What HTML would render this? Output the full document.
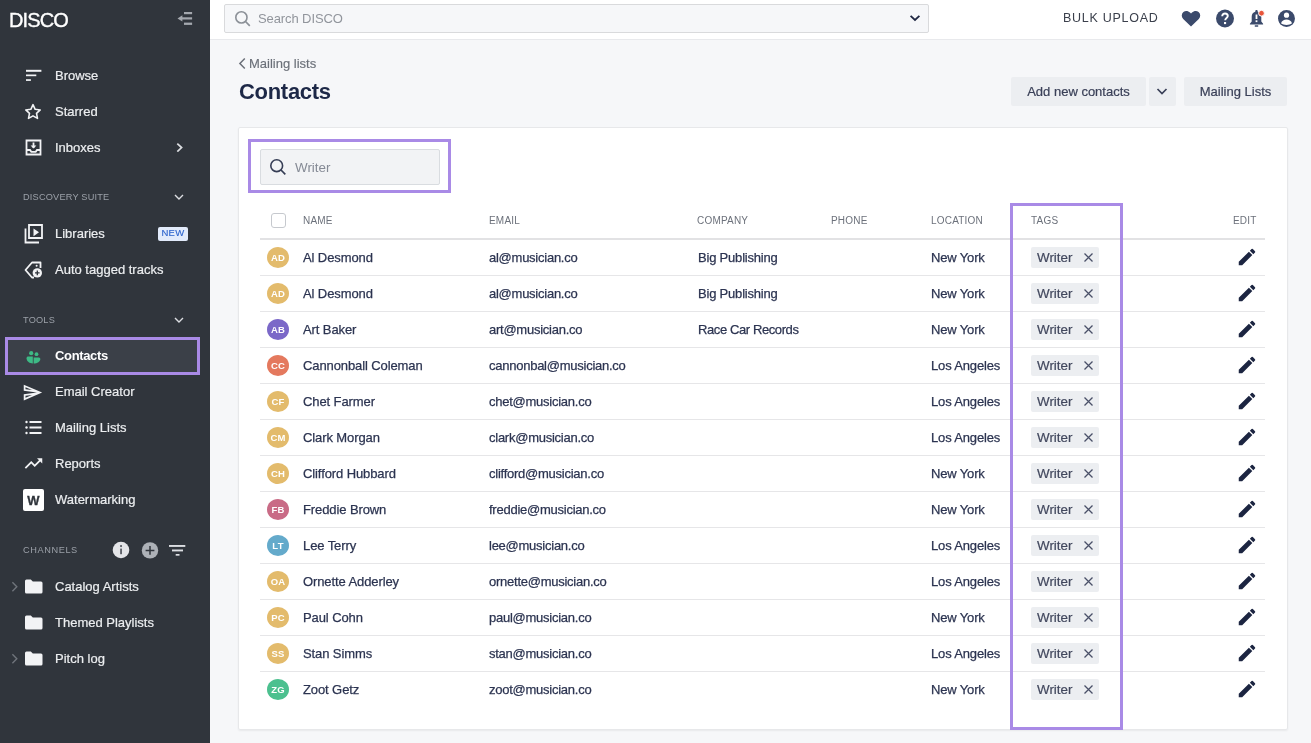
<!DOCTYPE html>
<html><head><meta charset="utf-8">
<style>

*{box-sizing:border-box;margin:0;padding:0}
html,body{width:1311px;height:743px;overflow:hidden;background:#f6f7f9;font-family:"Liberation Sans",sans-serif;}
.abs{position:absolute}
#sb{position:absolute;left:0;top:0;width:210px;height:743px;background:#30353c;color:#fff}
#sb .it{position:absolute;left:55px;font-size:13px;color:#eceef0;line-height:16px;letter-spacing:0;-webkit-text-stroke:.2px #eceef0}
#sb .ic{position:absolute}
#sb .sec{position:absolute;left:23px;font-size:9.2px;color:#9ba0a8;line-height:12px;letter-spacing:.2px}
#top{position:absolute;left:210px;top:0;width:1101px;height:40px;background:#fff;border-bottom:1px solid #e8e9ec}
#card{position:absolute;left:238px;top:127px;width:1050px;height:603px;background:#fff;border:1px solid #e7e8ea;border-radius:2px;box-shadow:0 1px 2px rgba(0,0,0,.06)}
.txt{position:absolute;font-size:13px;color:#2c3451;line-height:16px;white-space:nowrap;letter-spacing:-.2px;-webkit-text-stroke:.25px #2c3451}
.hd{position:absolute;font-size:10px;color:#6c717b;line-height:12px;top:215px;letter-spacing:.2px}
.sep{position:absolute;left:260px;width:1005px;height:1px;background:#e6e6e8}
.av{position:absolute;left:267px;width:22px;height:21px;border-radius:50%;color:#fff;font-size:9.5px;font-weight:bold;text-align:center;line-height:21px;letter-spacing:.2px}
.tag{position:absolute;left:1031px;width:68px;height:21px;background:#eceef1;border-radius:2px}
.tag span{position:absolute;left:6px;top:3px;font-size:13.4px;color:#42485e;line-height:16px;-webkit-text-stroke:.2px #42485e}
.tag svg{position:absolute;left:52px;top:5px}
.ed{position:absolute;left:1236px}

#root{position:absolute;left:0;top:0;width:1311px;height:743px;overflow:hidden;will-change:transform}

</style></head><body><div id="root">
<div id="sb">
<div class="abs" style="left:9px;top:8px;font-size:20px;color:#fff;line-height:24px;letter-spacing:-.9px;-webkit-text-stroke:.35px #fff">DISCO</div>
<svg class="abs" style="left:176px;top:10px" width="18" height="16" viewBox="0 0 18 16"><rect x="8" y="2" width="8.1" height="2.2" fill="#a4a8ae"/><rect x="5" y="7.3" width="11.1" height="2.2" fill="#a4a8ae"/><rect x="8" y="12.6" width="8.1" height="2.3" fill="#a4a8ae"/><path d="M1.5 8.4L6.4 5.3V11.5z" fill="#a4a8ae"/></svg>
<div class="it" style="top:68px">Browse</div>
<div class="it" style="top:104px">Starred</div>
<div class="it" style="top:140px">Inboxes</div>
<div class="it" style="top:226px">Libraries</div>
<div class="it" style="top:262px">Auto tagged tracks</div>
<div class="it" style="top:384px">Email Creator</div>
<div class="it" style="top:420px">Mailing Lists</div>
<div class="it" style="top:456px">Reports</div>
<div class="it" style="top:492px">Watermarking</div>
<div class="it" style="top:579px">Catalog Artists</div>
<div class="it" style="top:615px">Themed Playlists</div>
<div class="it" style="top:651px">Pitch log</div>
<div class="abs" style="left:5px;top:337px;width:195px;height:38px;border:3px solid #a98ae6;background:#3b4048"></div>
<div class="it" style="top:348px;font-weight:bold;color:#fff;letter-spacing:-.35px;-webkit-text-stroke:0">Contacts</div>
<div class="sec" style="top:191px;">DISCOVERY SUITE</div>
<div class="sec" style="top:314px;">TOOLS</div>
<div class="sec" style="top:544px;letter-spacing:.6px">CHANNELS</div>
<div class="abs" style="left:158px;top:227px;width:30px;height:14px;background:#e2ebfb;border-radius:2px;color:#2a62cc;font-size:9.5px;line-height:11px;text-align:center;letter-spacing:.3px;-webkit-text-stroke:.1px #2a62cc">NEW</div>
<svg class="ic" style="left:25px;top:68px" width="18" height="14" viewBox="0 0 18 14"><rect x="1" y="1.8" width="15.4" height="2" fill="#f2f3f5"/><rect x="1" y="6.5" width="10.3" height="1.7" fill="#f2f3f5"/><rect x="1" y="11.2" width="4.9" height="1.7" fill="#f2f3f5"/></svg>
<svg class="ic" style="left:23px;top:102px" width="20" height="20" viewBox="0 0 24 24"><path d="M12 3.2l2.6 5.6 6.1.7-4.5 4.2 1.2 6-5.4-3-5.4 3 1.2-6-4.5-4.2 6.1-.7z" fill="none" stroke="#f2f3f5" stroke-width="1.9" stroke-linejoin="round"/></svg>
<svg class="ic" style="left:25px;top:139px" width="17" height="17" viewBox="0 0 17 17"><path d="M1.5 1.5h14v14h-14z" fill="none" stroke="#f2f3f5" stroke-width="1.8"/><path d="M1.5 11h3.5l1.3 1.8h4.4l1.3-1.8h3.5" fill="none" stroke="#f2f3f5" stroke-width="1.8"/><path d="M8.5 3.5v5.5" stroke="#f2f3f5" stroke-width="1.8"/><path d="M5.6 6.6h5.8L8.5 9.6z" fill="#f2f3f5"/></svg>
<svg class="ic" style="left:174px;top:142px" width="10" height="10" viewBox="0 0 10 10"><path d="M3.3 1.6L7.6 5.6 3.3 9.6" fill="none" stroke="#dcdee2" stroke-width="1.7"/></svg>
<svg class="ic" style="left:174px;top:192px" width="10" height="10" viewBox="0 0 10 10"><path d="M1 3l4 4 4-4" fill="none" stroke="#dcdee2" stroke-width="1.4"/></svg>
<svg class="ic" style="left:174px;top:315px" width="10" height="10" viewBox="0 0 10 10"><path d="M1 3l4 4 4-4" fill="none" stroke="#dcdee2" stroke-width="1.4"/></svg>
<svg class="ic" style="left:24px;top:224px" width="20" height="20" viewBox="0 0 20 20"><path d="M5 1h13v13H5z" fill="none" stroke="#f2f3f5" stroke-width="1.8"/><path d="M1.5 4.5V18.5H15" fill="none" stroke="#f2f3f5" stroke-width="1.8"/><path d="M9.5 4.5L15 8.3 9.5 12.3z" fill="#f2f3f5"/></svg>
<svg class="ic" style="left:24px;top:260px" width="20" height="20" viewBox="0 0 20 20"><path d="M10 17.5H8L1.5 10 8 2.5H16.5V8" fill="none" stroke="#f2f3f5" stroke-width="1.8" stroke-linejoin="round"/><circle cx="12.6" cy="5.8" r="1" fill="#f2f3f5"/><circle cx="13.3" cy="12.9" r="4.7" fill="#f2f3f5"/><path d="M13.3 10.6v4.6M11 12.9h4.6" stroke="#30353c" stroke-width="1.3"/></svg>
<svg class="ic" style="left:26px;top:350px" width="15" height="15" viewBox="0 0 15 15"><circle cx="5.2" cy="3.2" r="2.1" fill="#3dba85"/><circle cx="10.5" cy="4.2" r="1.9" fill="#3dba85"/><path d="M0.6 8.2C0.6 7 1.5 6.6 2.6 6.6h4.2V13.4C3.6 13.4 .6 11.5.6 8.2z" fill="#3dba85"/><path d="M7.6 7.4h4.8c1 0 1.9.5 1.9 1.5 0 2.6-2.9 4.5-6.7 4.5z" fill="#3dba85"/></svg>
<svg class="ic" style="left:22px;top:382px" width="21" height="21" viewBox="0 0 24 24"><path d="M4.01 6.03l7.51 3.22-7.52-1 .01-2.22m7.5 8.72L4 17.97v-2.22l7.51-1M2.01 3L2 10l15 2-15 2 .01 7L23 12 2.01 3z" fill="#f2f3f5"/></svg>
<svg class="ic" style="left:25px;top:420px" width="18" height="15" viewBox="0 0 18 15"><circle cx="1.5" cy="2" r="1.2" fill="#f2f3f5"/><circle cx="1.5" cy="7.5" r="1.2" fill="#f2f3f5"/><circle cx="1.5" cy="13" r="1.2" fill="#f2f3f5"/><rect x="4.5" y="1" width="12" height="2" fill="#f2f3f5"/><rect x="4.5" y="6.5" width="12" height="2" fill="#f2f3f5"/><rect x="4.5" y="12" width="12" height="2" fill="#f2f3f5"/></svg>
<svg class="ic" style="left:23px;top:453px" width="21" height="21" viewBox="0 0 24 24"><path d="M16 6l2.29 2.29-4.88 4.88-4-4L2 16.59 3.41 18l6-6 4 4 6.3-6.29L22 12V6z" fill="#f2f3f5"/></svg>
<div class="ic" style="left:23px;top:489px;width:21px;height:22px;background:#fff;border-radius:2px;color:#30353c;font-weight:bold;font-size:13px;text-align:center;line-height:24px;-webkit-text-stroke:.3px #30353c">W</div>
<svg class="ic" style="left:112px;top:541px" width="18" height="18" viewBox="0 0 18 18"><circle cx="9" cy="9" r="8.3" fill="#e4e5e8"/><rect x="8.2" y="7.6" width="1.7" height="5.6" fill="#50545b"/><circle cx="9.05" cy="5.1" r="1.05" fill="#50545b"/></svg>
<svg class="ic" style="left:141px;top:541px" width="18" height="18" viewBox="0 0 18 18"><circle cx="9" cy="9.4" r="8.2" fill="#adb1b7"/><path d="M9 5v8.8M4.6 9.4h8.8" stroke="#30353c" stroke-width="1.5"/></svg>
<svg class="ic" style="left:168px;top:545px" width="18" height="12" viewBox="0 0 18 12"><rect x="1" y="0" width="16.3" height="1.9" fill="#dcdee2"/><rect x="4" y="4.5" width="11" height="1.9" fill="#dcdee2"/><rect x="7.7" y="9" width="3.8" height="1.7" fill="#dcdee2"/></svg>
<svg class="ic" style="left:10px;top:581px" width="9" height="11" viewBox="0 0 9 11"><path d="M2.4 1.3L6.8 5.8 2.4 10.3" fill="none" stroke="#6f747b" stroke-width="1.4"/></svg>
<svg class="ic" style="left:24px;top:579px" width="19" height="16" viewBox="0 0 19 16"><path d="M1 2a1.5 1.5 0 0 1 1.5-1.5h4.3l2 2h8.2a1.5 1.5 0 0 1 1.5 1.5v9a1.5 1.5 0 0 1-1.5 1.5H2.5A1.5 1.5 0 0 1 1 13z" fill="#f2f3f5"/></svg>
<svg class="ic" style="left:24px;top:615px" width="19" height="16" viewBox="0 0 19 16"><path d="M1 2a1.5 1.5 0 0 1 1.5-1.5h4.3l2 2h8.2a1.5 1.5 0 0 1 1.5 1.5v9a1.5 1.5 0 0 1-1.5 1.5H2.5A1.5 1.5 0 0 1 1 13z" fill="#f2f3f5"/></svg>
<svg class="ic" style="left:10px;top:653px" width="9" height="11" viewBox="0 0 9 11"><path d="M2.4 1.3L6.8 5.8 2.4 10.3" fill="none" stroke="#6f747b" stroke-width="1.4"/></svg>
<svg class="ic" style="left:24px;top:651px" width="19" height="16" viewBox="0 0 19 16"><path d="M1 2a1.5 1.5 0 0 1 1.5-1.5h4.3l2 2h8.2a1.5 1.5 0 0 1 1.5 1.5v9a1.5 1.5 0 0 1-1.5 1.5H2.5A1.5 1.5 0 0 1 1 13z" fill="#f2f3f5"/></svg>
</div>
<div id="top"></div>
<div class="abs" style="left:224px;top:4px;width:705px;height:29px;border:1px solid #d9dadc;border-radius:2px;background:#f6f7f9"></div>
<svg class="abs" style="left:234px;top:10px" width="17" height="17" viewBox="0 0 17 17"><circle cx="7.4" cy="7.4" r="5.6" fill="none" stroke="#8b9097" stroke-width="1.6"/><path d="M11.5 11.5l4.3 4.3" stroke="#8b9097" stroke-width="1.7"/></svg>
<div class="abs" style="left:258px;top:11px;font-size:13px;color:#91959c;line-height:16px;letter-spacing:-.1px">Search DISCO</div>
<svg class="abs" style="left:909px;top:12px" width="12" height="10" viewBox="0 0 12 10"><path d="M1.6 3.8L6 8l4.4-4.2" fill="none" stroke="#1f2742" stroke-width="1.8"/></svg>
<div class="abs" style="left:1063px;top:10px;font-size:12.5px;color:#3b404c;letter-spacing:.72px;line-height:16px">BULK UPLOAD</div>
<svg class="abs" style="left:1181px;top:10px" width="20" height="17" viewBox="0 0 20 17"><path d="M10 16.5L2.2 9C.2 7 .3 3.7 2.4 2 4.4.4 7.3.8 9 2.6l1 1 1-1C12.7.8 15.6.4 17.6 2c2.1 1.7 2.2 5 .2 7z" fill="#3b4a6b"/></svg>
<svg class="abs" style="left:1215px;top:9px" width="20" height="19" viewBox="0 0 20 19"><circle cx="10" cy="9.5" r="9" fill="#3b4a6b"/><path d="M7.2 7.3c0-1.7 1.2-2.8 2.8-2.8s2.8 1.1 2.8 2.6c0 1.9-2.6 2-2.6 4.1" fill="none" stroke="#fff" stroke-width="1.9"/><rect x="9" y="13" width="2.1" height="2.1" fill="#fff"/></svg>
<svg class="abs" style="left:1248px;top:9px" width="18" height="19" viewBox="0 0 18 19"><path d="M8.5 1c.7 0 1.2.5 1.2 1.2v.6c2.4.6 3.6 2.6 3.6 5v4.7l1.8 2.2v.8H1.9v-.8l1.8-2.2V7.8c0-2.4 1.2-4.4 3.6-5v-.6C7.3 1.5 7.8 1 8.5 1z" fill="#3b4a6b"/><rect x="7.6" y="5.5" width="1.8" height="4.5" fill="#fff"/><rect x="7.6" y="11.3" width="1.8" height="1.8" fill="#fff"/><path d="M6.8 17h3.4" stroke="#3b4a6b" stroke-width="1.5"/><circle cx="13.5" cy="4.2" r="2.9" fill="#e8553b" stroke="#fff" stroke-width="1"/></svg>
<svg class="abs" style="left:1277px;top:9px" width="19" height="19" viewBox="0 0 19 19"><circle cx="9.5" cy="9.45" r="8.45" fill="#3b4a6b"/><circle cx="9.5" cy="6.2" r="2.6" fill="#fff"/><path d="M4 14.2C4.8 12 7 10.6 9.5 10.6S14.2 12 15 14.2C13.6 15.3 11.6 15.9 9.5 15.9S5.4 15.3 4 14.2z" fill="#fff"/></svg>
<svg class="abs" style="left:238px;top:57px" width="9" height="13" viewBox="0 0 9 13"><path d="M6.8 1.5L1.9 6.5l4.9 5" fill="none" stroke="#6b7079" stroke-width="1.5"/></svg>
<div class="abs" style="left:249px;top:56px;font-size:13px;-webkit-text-stroke:.15px #6b7079;color:#6b7079;line-height:16px">Mailing lists</div>
<div class="abs" style="left:239px;top:79px;font-size:22px;font-weight:bold;color:#1d2847;line-height:25px;letter-spacing:-.3px">Contacts</div>
<div class="abs" style="left:1011px;top:77px;width:135px;height:29px;background:#eceef1;border-radius:2px;font-size:13px;color:#3a4058;line-height:30px;text-align:center;-webkit-text-stroke:.2px #3a4058">Add new contacts</div>
<div class="abs" style="left:1149px;top:77px;width:27px;height:29px;background:#eceef1;border-radius:2px"></div>
<svg class="abs" style="left:1156px;top:87px" width="12" height="9" viewBox="0 0 12 9"><path d="M1.5 2l4.5 4.5 4.5-4.5" fill="none" stroke="#3a4058" stroke-width="1.7"/></svg>
<div class="abs" style="left:1184px;top:77px;width:103px;height:29px;background:#eceef1;border-radius:2px;font-size:13px;color:#3a4058;line-height:30px;text-align:center;-webkit-text-stroke:.2px #3a4058">Mailing Lists</div>
<div id="card"></div>
<div class="abs" style="left:260px;top:149px;width:180px;height:36px;background:#f2f3f5;border:1px solid #d9dce0;border-radius:2px"></div>
<svg class="abs" style="left:269px;top:158px" width="18" height="18" viewBox="0 0 18 18"><circle cx="7.7" cy="7.7" r="5.9" fill="none" stroke="#363d55" stroke-width="1.6"/><path d="M12 12l4.3 4.3" stroke="#363d55" stroke-width="1.7"/></svg>
<div class="abs" style="left:295px;top:160px;font-size:13.4px;color:#858a95;line-height:16px">Writer</div>
<div class="abs" style="left:248px;top:139px;width:203px;height:54px;border:3px solid #a98ae6"></div>
<div class="abs" style="left:271px;top:213px;width:15px;height:15px;border:1px solid #c6c9ce;border-radius:3px;background:#fff"></div>
<div class="hd" style="left:303px">NAME</div>
<div class="hd" style="left:489px">EMAIL</div>
<div class="hd" style="left:697px">COMPANY</div>
<div class="hd" style="left:831px">PHONE</div>
<div class="hd" style="left:931px">LOCATION</div>
<div class="hd" style="left:1031px">TAGS</div>
<div class="hd" style="left:1233px">EDIT</div>
<div class="abs" style="left:260px;top:238px;width:1005px;height:2px;background:#e2e2e4"></div>
<div class="av" style="top:247px;background:#e3bb6c">AD</div>
<div class="txt" style="left:303px;top:250px;letter-spacing:-.1px">Al Desmond</div>
<div class="txt" style="left:489px;top:250px;letter-spacing:-.25px">al@musician.co</div>
<div class="txt" style="left:698px;top:250px;letter-spacing:-.2px">Big Publishing</div>
<div class="txt" style="left:931px;top:250px;letter-spacing:-.15px">New York</div>
<div class="tag" style="top:247px"><span>Writer</span><svg width="11" height="11" viewBox="0 0 11 11"><path d="M1.5 1.5l8 8M9.5 1.5l-8 8" stroke="#4a5068" stroke-width="1.25"/></svg></div>
<svg class="ed" style="top:246px" width="22" height="22" viewBox="0 0 24 24"><path d="M3 17.25V21h3.75L17.81 9.94l-3.75-3.75L3 17.25zM20.71 7.04a1 1 0 0 0 0-1.41l-2.34-2.34a1 1 0 0 0-1.41 0l-1.83 1.83 3.75 3.75 1.83-1.83z" fill="#1c2541"/></svg>
<div class="sep" style="top:275px"></div>
<div class="av" style="top:283px;background:#e3bb6c">AD</div>
<div class="txt" style="left:303px;top:286px;letter-spacing:-.1px">Al Desmond</div>
<div class="txt" style="left:489px;top:286px;letter-spacing:-.25px">al@musician.co</div>
<div class="txt" style="left:698px;top:286px;letter-spacing:-.2px">Big Publishing</div>
<div class="txt" style="left:931px;top:286px;letter-spacing:-.15px">New York</div>
<div class="tag" style="top:283px"><span>Writer</span><svg width="11" height="11" viewBox="0 0 11 11"><path d="M1.5 1.5l8 8M9.5 1.5l-8 8" stroke="#4a5068" stroke-width="1.25"/></svg></div>
<svg class="ed" style="top:282px" width="22" height="22" viewBox="0 0 24 24"><path d="M3 17.25V21h3.75L17.81 9.94l-3.75-3.75L3 17.25zM20.71 7.04a1 1 0 0 0 0-1.41l-2.34-2.34a1 1 0 0 0-1.41 0l-1.83 1.83 3.75 3.75 1.83-1.83z" fill="#1c2541"/></svg>
<div class="sep" style="top:311px"></div>
<div class="av" style="top:319px;background:#7b68c8">AB</div>
<div class="txt" style="left:303px;top:322px;letter-spacing:-.1px">Art Baker</div>
<div class="txt" style="left:489px;top:322px;letter-spacing:-.25px">art@musician.co</div>
<div class="txt" style="left:698px;top:322px;letter-spacing:-.4px">Race Car Records</div>
<div class="txt" style="left:931px;top:322px;letter-spacing:-.15px">New York</div>
<div class="tag" style="top:319px"><span>Writer</span><svg width="11" height="11" viewBox="0 0 11 11"><path d="M1.5 1.5l8 8M9.5 1.5l-8 8" stroke="#4a5068" stroke-width="1.25"/></svg></div>
<svg class="ed" style="top:318px" width="22" height="22" viewBox="0 0 24 24"><path d="M3 17.25V21h3.75L17.81 9.94l-3.75-3.75L3 17.25zM20.71 7.04a1 1 0 0 0 0-1.41l-2.34-2.34a1 1 0 0 0-1.41 0l-1.83 1.83 3.75 3.75 1.83-1.83z" fill="#1c2541"/></svg>
<div class="sep" style="top:347px"></div>
<div class="av" style="top:355px;background:#e4795e">CC</div>
<div class="txt" style="left:303px;top:358px;letter-spacing:-.1px">Cannonball Coleman</div>
<div class="txt" style="left:489px;top:358px;letter-spacing:-.25px">cannonbal@musician.co</div>
<div class="txt" style="left:931px;top:358px;letter-spacing:-.15px">Los Angeles</div>
<div class="tag" style="top:355px"><span>Writer</span><svg width="11" height="11" viewBox="0 0 11 11"><path d="M1.5 1.5l8 8M9.5 1.5l-8 8" stroke="#4a5068" stroke-width="1.25"/></svg></div>
<svg class="ed" style="top:354px" width="22" height="22" viewBox="0 0 24 24"><path d="M3 17.25V21h3.75L17.81 9.94l-3.75-3.75L3 17.25zM20.71 7.04a1 1 0 0 0 0-1.41l-2.34-2.34a1 1 0 0 0-1.41 0l-1.83 1.83 3.75 3.75 1.83-1.83z" fill="#1c2541"/></svg>
<div class="sep" style="top:383px"></div>
<div class="av" style="top:391px;background:#e3bb6c">CF</div>
<div class="txt" style="left:303px;top:394px;letter-spacing:-.1px">Chet Farmer</div>
<div class="txt" style="left:489px;top:394px;letter-spacing:-.25px">chet@musician.co</div>
<div class="txt" style="left:931px;top:394px;letter-spacing:-.15px">Los Angeles</div>
<div class="tag" style="top:391px"><span>Writer</span><svg width="11" height="11" viewBox="0 0 11 11"><path d="M1.5 1.5l8 8M9.5 1.5l-8 8" stroke="#4a5068" stroke-width="1.25"/></svg></div>
<svg class="ed" style="top:390px" width="22" height="22" viewBox="0 0 24 24"><path d="M3 17.25V21h3.75L17.81 9.94l-3.75-3.75L3 17.25zM20.71 7.04a1 1 0 0 0 0-1.41l-2.34-2.34a1 1 0 0 0-1.41 0l-1.83 1.83 3.75 3.75 1.83-1.83z" fill="#1c2541"/></svg>
<div class="sep" style="top:419px"></div>
<div class="av" style="top:427px;background:#e3bb6c">CM</div>
<div class="txt" style="left:303px;top:430px;letter-spacing:-.1px">Clark Morgan</div>
<div class="txt" style="left:489px;top:430px;letter-spacing:-.25px">clark@musician.co</div>
<div class="txt" style="left:931px;top:430px;letter-spacing:-.15px">Los Angeles</div>
<div class="tag" style="top:427px"><span>Writer</span><svg width="11" height="11" viewBox="0 0 11 11"><path d="M1.5 1.5l8 8M9.5 1.5l-8 8" stroke="#4a5068" stroke-width="1.25"/></svg></div>
<svg class="ed" style="top:426px" width="22" height="22" viewBox="0 0 24 24"><path d="M3 17.25V21h3.75L17.81 9.94l-3.75-3.75L3 17.25zM20.71 7.04a1 1 0 0 0 0-1.41l-2.34-2.34a1 1 0 0 0-1.41 0l-1.83 1.83 3.75 3.75 1.83-1.83z" fill="#1c2541"/></svg>
<div class="sep" style="top:455px"></div>
<div class="av" style="top:463px;background:#e3bb6c">CH</div>
<div class="txt" style="left:303px;top:466px;letter-spacing:-.1px">Clifford Hubbard</div>
<div class="txt" style="left:489px;top:466px;letter-spacing:-.25px">clifford@musician.co</div>
<div class="txt" style="left:931px;top:466px;letter-spacing:-.15px">New York</div>
<div class="tag" style="top:463px"><span>Writer</span><svg width="11" height="11" viewBox="0 0 11 11"><path d="M1.5 1.5l8 8M9.5 1.5l-8 8" stroke="#4a5068" stroke-width="1.25"/></svg></div>
<svg class="ed" style="top:462px" width="22" height="22" viewBox="0 0 24 24"><path d="M3 17.25V21h3.75L17.81 9.94l-3.75-3.75L3 17.25zM20.71 7.04a1 1 0 0 0 0-1.41l-2.34-2.34a1 1 0 0 0-1.41 0l-1.83 1.83 3.75 3.75 1.83-1.83z" fill="#1c2541"/></svg>
<div class="sep" style="top:491px"></div>
<div class="av" style="top:499px;background:#c96b86">FB</div>
<div class="txt" style="left:303px;top:502px;letter-spacing:-.1px">Freddie Brown</div>
<div class="txt" style="left:489px;top:502px;letter-spacing:-.25px">freddie@musician.co</div>
<div class="txt" style="left:931px;top:502px;letter-spacing:-.15px">New York</div>
<div class="tag" style="top:499px"><span>Writer</span><svg width="11" height="11" viewBox="0 0 11 11"><path d="M1.5 1.5l8 8M9.5 1.5l-8 8" stroke="#4a5068" stroke-width="1.25"/></svg></div>
<svg class="ed" style="top:498px" width="22" height="22" viewBox="0 0 24 24"><path d="M3 17.25V21h3.75L17.81 9.94l-3.75-3.75L3 17.25zM20.71 7.04a1 1 0 0 0 0-1.41l-2.34-2.34a1 1 0 0 0-1.41 0l-1.83 1.83 3.75 3.75 1.83-1.83z" fill="#1c2541"/></svg>
<div class="sep" style="top:527px"></div>
<div class="av" style="top:535px;background:#64aacb">LT</div>
<div class="txt" style="left:303px;top:538px;letter-spacing:-.1px">Lee Terry</div>
<div class="txt" style="left:489px;top:538px;letter-spacing:-.25px">lee@musician.co</div>
<div class="txt" style="left:931px;top:538px;letter-spacing:-.15px">Los Angeles</div>
<div class="tag" style="top:535px"><span>Writer</span><svg width="11" height="11" viewBox="0 0 11 11"><path d="M1.5 1.5l8 8M9.5 1.5l-8 8" stroke="#4a5068" stroke-width="1.25"/></svg></div>
<svg class="ed" style="top:534px" width="22" height="22" viewBox="0 0 24 24"><path d="M3 17.25V21h3.75L17.81 9.94l-3.75-3.75L3 17.25zM20.71 7.04a1 1 0 0 0 0-1.41l-2.34-2.34a1 1 0 0 0-1.41 0l-1.83 1.83 3.75 3.75 1.83-1.83z" fill="#1c2541"/></svg>
<div class="sep" style="top:563px"></div>
<div class="av" style="top:571px;background:#e3bb6c">OA</div>
<div class="txt" style="left:303px;top:574px;letter-spacing:-.1px">Ornette Adderley</div>
<div class="txt" style="left:489px;top:574px;letter-spacing:-.25px">ornette@musician.co</div>
<div class="txt" style="left:931px;top:574px;letter-spacing:-.15px">Los Angeles</div>
<div class="tag" style="top:571px"><span>Writer</span><svg width="11" height="11" viewBox="0 0 11 11"><path d="M1.5 1.5l8 8M9.5 1.5l-8 8" stroke="#4a5068" stroke-width="1.25"/></svg></div>
<svg class="ed" style="top:570px" width="22" height="22" viewBox="0 0 24 24"><path d="M3 17.25V21h3.75L17.81 9.94l-3.75-3.75L3 17.25zM20.71 7.04a1 1 0 0 0 0-1.41l-2.34-2.34a1 1 0 0 0-1.41 0l-1.83 1.83 3.75 3.75 1.83-1.83z" fill="#1c2541"/></svg>
<div class="sep" style="top:599px"></div>
<div class="av" style="top:607px;background:#e3bb6c">PC</div>
<div class="txt" style="left:303px;top:610px;letter-spacing:-.1px">Paul Cohn</div>
<div class="txt" style="left:489px;top:610px;letter-spacing:-.25px">paul@musician.co</div>
<div class="txt" style="left:931px;top:610px;letter-spacing:-.15px">New York</div>
<div class="tag" style="top:607px"><span>Writer</span><svg width="11" height="11" viewBox="0 0 11 11"><path d="M1.5 1.5l8 8M9.5 1.5l-8 8" stroke="#4a5068" stroke-width="1.25"/></svg></div>
<svg class="ed" style="top:606px" width="22" height="22" viewBox="0 0 24 24"><path d="M3 17.25V21h3.75L17.81 9.94l-3.75-3.75L3 17.25zM20.71 7.04a1 1 0 0 0 0-1.41l-2.34-2.34a1 1 0 0 0-1.41 0l-1.83 1.83 3.75 3.75 1.83-1.83z" fill="#1c2541"/></svg>
<div class="sep" style="top:635px"></div>
<div class="av" style="top:643px;background:#e3bb6c">SS</div>
<div class="txt" style="left:303px;top:646px;letter-spacing:-.1px">Stan Simms</div>
<div class="txt" style="left:489px;top:646px;letter-spacing:-.25px">stan@musician.co</div>
<div class="txt" style="left:931px;top:646px;letter-spacing:-.15px">Los Angeles</div>
<div class="tag" style="top:643px"><span>Writer</span><svg width="11" height="11" viewBox="0 0 11 11"><path d="M1.5 1.5l8 8M9.5 1.5l-8 8" stroke="#4a5068" stroke-width="1.25"/></svg></div>
<svg class="ed" style="top:642px" width="22" height="22" viewBox="0 0 24 24"><path d="M3 17.25V21h3.75L17.81 9.94l-3.75-3.75L3 17.25zM20.71 7.04a1 1 0 0 0 0-1.41l-2.34-2.34a1 1 0 0 0-1.41 0l-1.83 1.83 3.75 3.75 1.83-1.83z" fill="#1c2541"/></svg>
<div class="sep" style="top:671px"></div>
<div class="av" style="top:679px;background:#4cc08f">ZG</div>
<div class="txt" style="left:303px;top:682px;letter-spacing:-.1px">Zoot Getz</div>
<div class="txt" style="left:489px;top:682px;letter-spacing:-.25px">zoot@musician.co</div>
<div class="txt" style="left:931px;top:682px;letter-spacing:-.15px">New York</div>
<div class="tag" style="top:679px"><span>Writer</span><svg width="11" height="11" viewBox="0 0 11 11"><path d="M1.5 1.5l8 8M9.5 1.5l-8 8" stroke="#4a5068" stroke-width="1.25"/></svg></div>
<svg class="ed" style="top:678px" width="22" height="22" viewBox="0 0 24 24"><path d="M3 17.25V21h3.75L17.81 9.94l-3.75-3.75L3 17.25zM20.71 7.04a1 1 0 0 0 0-1.41l-2.34-2.34a1 1 0 0 0-1.41 0l-1.83 1.83 3.75 3.75 1.83-1.83z" fill="#1c2541"/></svg>
<div class="abs" style="left:1010px;top:203px;width:113px;height:527px;border:3px solid #a98ae6"></div>
</div></body></html>
